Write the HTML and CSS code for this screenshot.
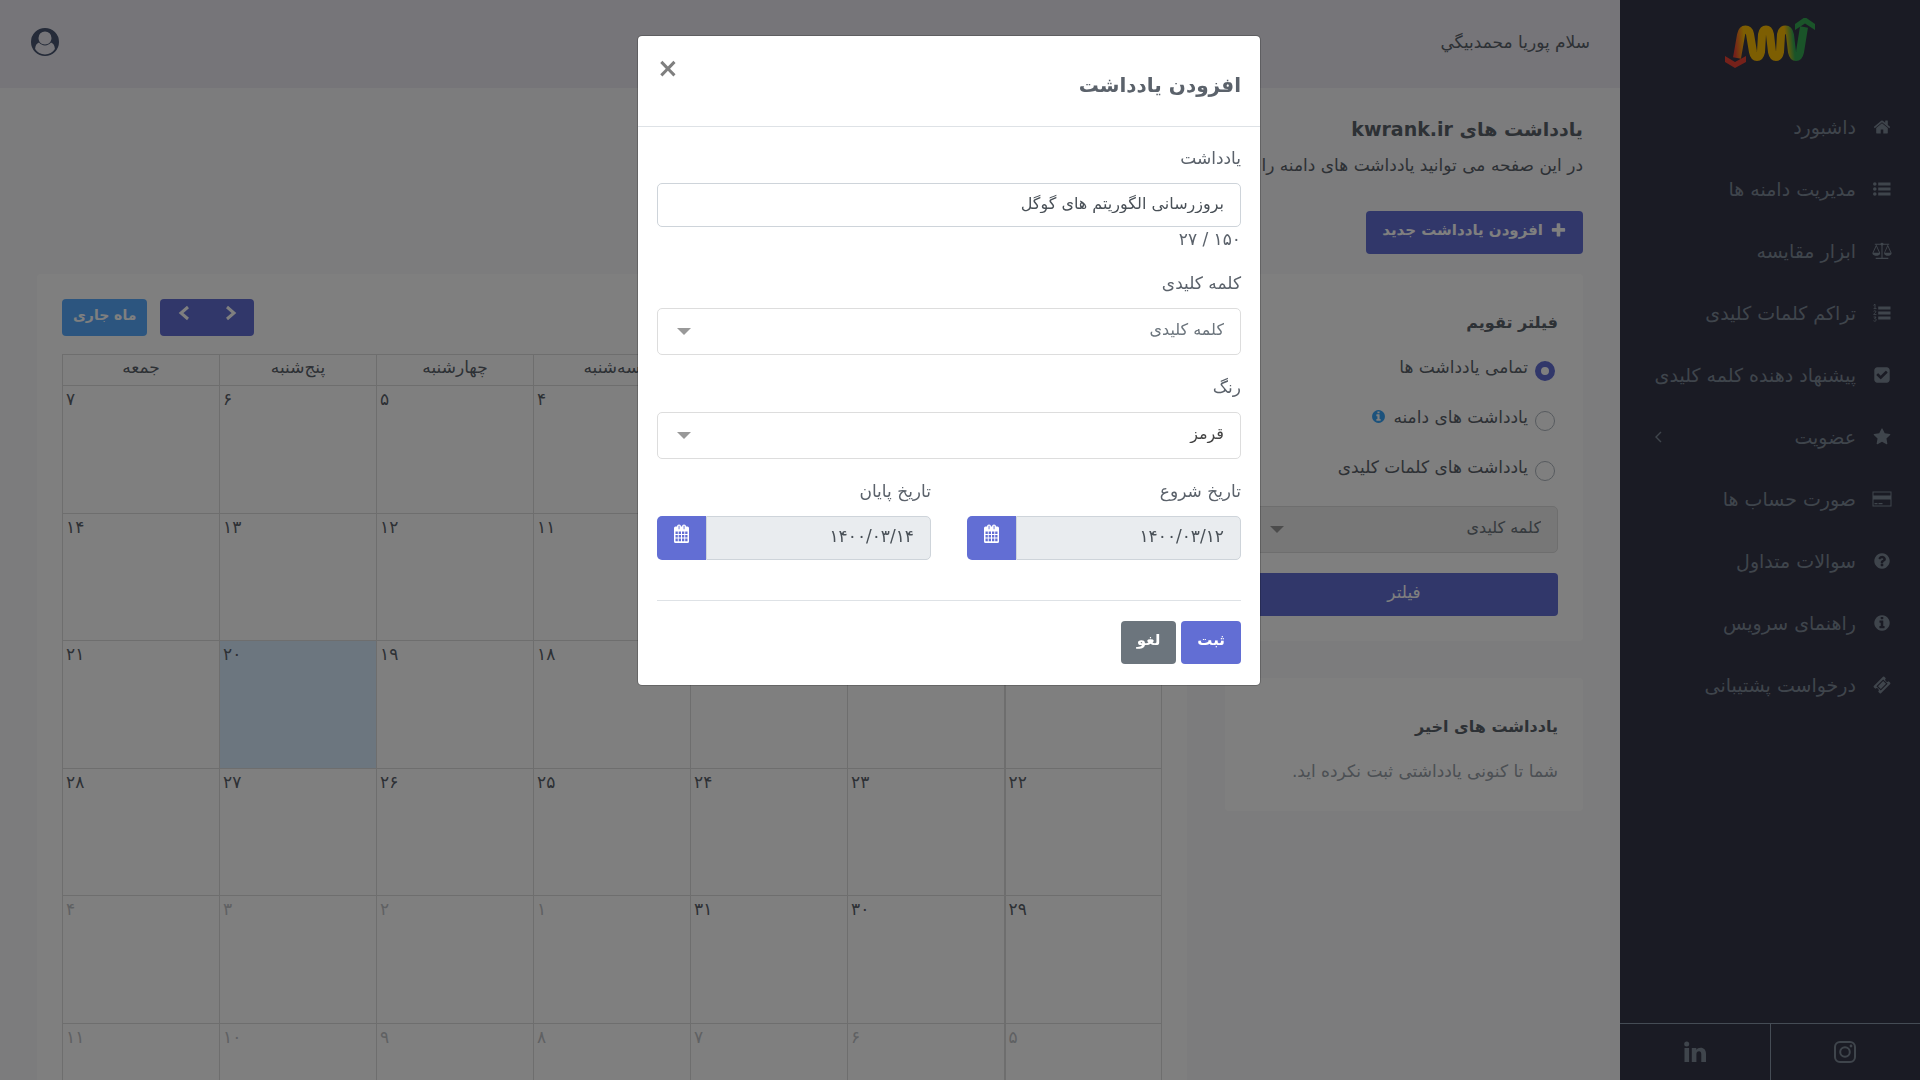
FILE: index.html
```html
<!DOCTYPE html>
<html lang="fa" dir="rtl">
<head>
    <meta charset="UTF-8">
    <meta name="viewport" content="width=device-width, initial-scale=1.0">
    <title>یادداشت های kwrank.ir</title>
    <link rel="stylesheet" href="styles.css">
</head>
<body>
    <svg class="sprite" aria-hidden="true">
        <symbol id="i-home" viewBox="0 0 1792 1792"><path d="M1472 992v480q0 26-19 45t-45 19h-384v-384h-256v384h-384q-26 0-45-19t-19-45v-480q0-1 .5-3t.5-3l575-474 575 474q1 2 1 6zm223-69l-62 74q-8 9-21 11h-3q-13 0-21-7l-692-577-692 577q-12 8-24 7-13-2-21-11l-62-74q-8-10-7-23.5t11-21.5l719-599q32-26 76-26t76 26l244 204v-195q0-14 9-23t23-9h192q14 0 23 9t9 23v408l219 182q10 8 11 21.5t-7 23.5z"/></symbol>
        <symbol id="i-list" viewBox="0 0 18 18"><path d="M5.200 2.500h12.300v3H5.200zM5.200 7.500h12.300v3H5.200zM5.200 12.500h12.300v3H5.200z"/><circle cx="1.800" cy="4" r="1.800"/><circle cx="1.800" cy="9" r="1.800"/><circle cx="1.800" cy="14" r="1.800"/></symbol>
        <symbol id="i-scale" viewBox="0 0 22 20"><path d="M3 2h6.200a2 2 0 0 1 3.600 0H19v1h-1.500l4.200 9.200c0 2-1.800 3.200-4.200 3.200s-4.200-1.200-4.200-3.200L17.200 3h-4.600a2 2 0 0 1-1 .8V17.500H18v1.500H4v-1.500h6.400V3.800a2 2 0 0 1-1-.8H4.800L9 12.200c0 2-1.800 3.200-4.200 3.200S.3 14.200.3 12.200L4.500 3H3zM4.700 5L1.500 12h6.300zM17.400 5l-3.200 7h6.300z"/></symbol>
        <symbol id="i-listol" viewBox="0 0 18 18"><path d="M5.200 2.500h12.300v3H5.200zM5.200 7.500h12.300v3H5.200zM5.200 12.500h12.300v3H5.200z"/><path d="M.5 1.300L2 .2v4.300M.6 4.600h2.900M.6 7.300c.8-.9 2.500-.6 2.300.6-.1.900-2.200 1.600-2.200 2.700h2.700M.6 13h2.500l-1.500 1.700c2.300-.2 2 2.500.2 2.500-.6 0-1-.2-1.300-.5" fill="none" stroke="currentColor" stroke-width=".9"/></symbol>
        <symbol id="i-check" viewBox="0 0 1792 1792"><path d="M813 1299l614-614q19-19 19-45t-19-45l-102-102q-19-19-45-19t-45 19l-467 467-211-211q-19-19-45-19t-45 19l-102 102q-19 19-19 45t19 45l358 358q19 19 45 19t45-19zm851-883v960q0 119-84.500 203.500t-203.500 84.500h-960q-119 0-203.500-84.500t-84.500-203.500v-960q0-119 84.500-203.500t203.500-84.500h960q119 0 203.500 84.500t84.500 203.500z"/></symbol>
        <symbol id="i-star" viewBox="0 0 1792 1792"><path d="M1728 647q0 22-26 48l-363 354 86 500q1 7 1 20 0 21-10.500 35.500t-30.500 14.500q-19 0-40-12l-449-236-449 236q-22 12-40 12-21 0-31.500-14.500t-10.500-35.500q0-6 2-20l86-500-364-354q-25-27-25-48 0-37 56-46l502-73 225-455q19-41 49-41t49 41l225 455 502 73q56 9 56 46z"/></symbol>
        <symbol id="i-card" viewBox="-1 -1 22 18"><path fill-rule="evenodd" d="M.5.5h19v15H.5zM1.500 1.500v3h17v-3zM1.500 8.500v6h17v-6z"/><path d="M2.500 12h3v1.300h-3zM6.500 12h4v1.300h-4z"/></symbol>
        <symbol id="i-question" viewBox="0 0 1792 1792"><path d="M1024 1376v-192q0-14-9-23t-23-9h-192q-14 0-23 9t-9 23v192q0 14 9 23t23 9h192q14 0 23-9t9-23zm256-672q0-88-55.500-163t-138.500-116-170-41q-243 0-371 213-15 24 8 42l132 100q7 6 19 6 16 0 25-12 53-68 86-92 34-24 86-24 48 0 85.500 26t37.500 59q0 38-20 61t-68 45q-63 28-115.500 86.500t-52.500 125.500v36q0 14 9 23t23 9h192q14 0 23-9t9-23q0-19 21.500-49.500t54.500-49.500q32-18 49-28.500t46-35 44.500-48 28-60.500 12.500-81zm384 192q0 209-103 385.500t-279.500 279.500-385.500 103-385.500-103-279.500-279.500-103-385.500 103-385.500 279.500-279.500 385.500-103 385.500 103 279.500 279.500 103 385.500z"/></symbol>
        <symbol id="i-info" viewBox="0 0 1792 1792"><path d="M1152 1376v-160q0-14-9-23t-23-9h-96v-512q0-14-9-23t-23-9h-320q-14 0-23 9t-9 23v160q0 14 9 23t23 9h96v320h-96q-14 0-23 9t-9 23v160q0 14 9 23t23 9h448q14 0 23-9t9-23zm-128-896v-160q0-14-9-23t-23-9h-192q-14 0-23 9t-9 23v160q0 14 9 23t23 9h192q14 0 23-9t9-23zm640 416q0 209-103 385.500t-279.500 279.500-385.500 103-385.500-103-279.500-279.500-103-385.500 103-385.500 279.500-279.500 385.500-103 385.500 103 279.500 279.500 103 385.500z"/></symbol>
        <symbol id="i-ticket" viewBox="0 0 18 18"><path fill-rule="evenodd" d="M11.300.8l1.500 1.500a2 2 0 0 0 2.900 2.900l1.500 1.500a1 1 0 0 1 0 1.300l-9.200 9.200a1 1 0 0 1-1.300 0l-1.500-1.500a2 2 0 0 0-2.900-2.900L.8 11.300a1 1 0 0 1 0-1.300L10 .8a1 1 0 0 1 1.300 0zM10.200 3.400L3.400 10.200l4.400 4.400 6.800-6.800z"/><path d="M10.200 5l2.800 2.800-5.200 5.200L5 10.200z"/></symbol>
        <symbol id="i-plus" viewBox="0 0 1792 1792"><path d="M1600 736v192q0 40-28 68t-68 28h-416v416q0 40-28 68t-68 28h-192q-40 0-68-28t-28-68v-416h-416q-40 0-68-28t-28-68v-192q0-40 28-68t68-28h416v-416q0-40 28-68t68-28h192q40 0 68 28t28 68v416h416q40 0 68 28t28 68z"/></symbol>
        <symbol id="i-calendar" viewBox="0 0 15 19">
            <path fill-rule="evenodd" d="M1.500 2.500H3a2 2 0 0 1 4 0h1a2 2 0 0 1 4 0h1.500a1.500 1.500 0 0 1 1.500 1.500v13.500a1.500 1.500 0 0 1-1.500 1.500h-12A1.500 1.500 0 0 1 0 17.500V4a1.500 1.500 0 0 1 1.500-1.500zM4.600 1.800v3.400h.9V1.800zM9.600 1.800v3.400h.9V1.800zM1.500 7.500V10h2.300V7.500zM4.700 7.500V10H7V7.500zM8 7.500V10h2.300V7.500zM11.200 7.500V10h2.300V7.500zM1.500 11v2.600h2.300V11zM4.700 11v2.600H7V11zM8 11v2.600h2.300V11zM11.200 11v2.600h2.300V11zM1.500 14.600v2.600h2.300v-2.600zM4.700 14.600v2.600H7v-2.600zM8 14.600v2.600h2.300v-2.600zM11.200 14.600v2.600h2.300v-2.600z"/>
        </symbol>
        <symbol id="i-left" viewBox="0 0 12 16"><path d="M10 2L3 8l7 6" fill="none" stroke="currentColor" stroke-width="3"/></symbol>
        <symbol id="i-right" viewBox="0 0 12 16"><path d="M2 2l7 6-7 6" fill="none" stroke="currentColor" stroke-width="3"/></symbol>
        <symbol id="i-angle" viewBox="0 0 8 12"><path d="M7 1L2 6l5 5" fill="none" stroke="currentColor" stroke-width="1.400"/></symbol>
        <symbol id="i-linkedin" viewBox="0 0 22 21"><circle cx="2.700" cy="2.500" r="2.500"/><path d="M.5 6.500h4.600V20.500H.5zM7.800 6.500h4.500v2c.9-1.500 2.300-2.300 4.300-2.300 3.300 0 5.400 2.100 5.400 6.200v8.100h-4.700v-7.500c0-2-.7-3.200-2.300-3.200-1.700 0-2.600 1.200-2.600 3.200v7.500H7.800z"/></symbol>
        <symbol id="i-instagram" viewBox="0 0 22 22"><g fill="none" stroke="currentColor" stroke-width="2"><rect x="1" y="1" width="20" height="20" rx="5"/><circle cx="11" cy="11" r="4.800"/></g><circle cx="17" cy="5" r="1.400"/></symbol>
        <symbol id="i-user" viewBox="0 0 28 28"><path fill-rule="evenodd" d="M14 0a14 14 0 1 1 0 28 14 14 0 0 1 0-28zM14 3.400a6.500 6.500 0 0 0-6.500 6.500c0 3.700 2.800 6.500 6.500 6.500s6.500-2.800 6.500-6.500A6.500 6.500 0 0 0 14 3.400zM8 14.600c-2.500.9-3.700 3-3.900 6.500 2.100 3.300 5.700 5.500 9.900 5.500s7.800-2.200 9.900-5.500c-.2-3.500-1.400-5.600-3.900-6.500-1.500 1.900-3.500 2.800-6 2.800s-4.500-.9-6-2.800z"/></symbol>
    </svg>

    <div class="wrapper">
        <aside class="sidebar">
            <a href="#" class="logo" aria-label="kwrank">
                <svg viewBox="0 0 90 50" width="90" height="50">
                    <defs>
                        <linearGradient id="logoLine" gradientUnits="userSpaceOnUse" x1="10" y1="36" x2="79" y2="30">
                            <stop offset="0" stop-color="#ea4335"/>
                            <stop offset=".15" stop-color="#fbbc05"/>
                            <stop offset=".74" stop-color="#fbbc05"/>
                            <stop offset=".86" stop-color="#34a853"/>
                        </linearGradient>
                    </defs>
                    <path d="M12 40L16 17Q17 11.500 20.500 11.500T25 16L28 34Q29 39 32 39T36 34L37 16.500Q38 11.500 41 11.500T45 16.500L47 34Q48 39 51 39T55 34L56 16.500Q57 11.500 60.500 11.500T65 17L67 34Q68 39 71 39T75 34L79 9" fill="none" stroke="url(#logoLine)" stroke-width="8"/>
                    <path d="M80-1L90 6v6L80 5.500 70 12V6z" fill="#34a853"/>
                    <path d="M10 50L0 44v-6l10 6 11-6v6z" fill="#ea4335"/>
                </svg>
            </a>
            <nav class="menu">
                <a href="#"><svg class="icon"><use href="#i-home"/></svg><span>داشبورد</span></a>
                <a href="#"><svg class="icon"><use href="#i-list"/></svg><span>مدیریت دامنه ها</span></a>
                <a href="#"><svg class="icon"><use href="#i-scale"/></svg><span>ابزار مقایسه</span></a>
                <a href="#"><svg class="icon"><use href="#i-listol"/></svg><span>تراکم کلمات کلیدی</span></a>
                <a href="#"><svg class="icon"><use href="#i-check"/></svg><span>پیشنهاد دهنده کلمه کلیدی</span></a>
                <a href="#"><svg class="icon"><use href="#i-star"/></svg><span>عضویت</span><svg class="arrow"><use href="#i-angle"/></svg></a>
                <a href="#"><svg class="icon"><use href="#i-card"/></svg><span>صورت حساب ها</span></a>
                <a href="#"><svg class="icon"><use href="#i-question"/></svg><span>سوالات متداول</span></a>
                <a href="#"><svg class="icon"><use href="#i-info"/></svg><span>راهنمای سرویس</span></a>
                <a href="#"><svg class="icon"><use href="#i-ticket"/></svg><span>درخواست پشتیبانی</span></a>
            </nav>
            <div class="social">
                <a href="#" aria-label="Instagram"><svg><use href="#i-instagram"/></svg></a>
                <a href="#" aria-label="LinkedIn"><svg><use href="#i-linkedin"/></svg></a>
            </div>
        </aside>

        <div class="main">
            <header class="topbar">
                <span>سلام پوریا محمدبیگي</span>
                <button class="user" aria-label="حساب کاربری"><svg><use href="#i-user"/></svg></button>
            </header>

            <div class="page-title">
                <h1>یادداشت های kwrank.ir</h1>
                <p>در این صفحه می توانید یادداشت های دامنه را</p>
                <button class="btn btn-primary"><svg><use href="#i-plus"/></svg>افزودن یادداشت جدید</button>
            </div>

            <div class="row">
                <div class="col-side">
                    <form class="card">
                        <h2>فیلتر تقویم</h2>
                        <label class="radio"><input type="radio" name="filter" checked>تمامی یادداشت ها</label>
                        <label class="radio"><input type="radio" name="filter">یادداشت های دامنه <svg><use href="#i-info"/></svg></label>
                        <label class="radio"><input type="radio" name="filter">یادداشت های کلمات کلیدی</label>
                        <div class="select disabled">
                            <select aria-label="کلمه کلیدی" disabled><option>کلمه کلیدی</option></select>
                        </div>
                        <button type="button" class="btn btn-primary btn-block">فیلتر</button>
                    </form>
                    <div class="card recent">
                        <h2>یادداشت های اخیر</h2>
                        <p>شما تا کنونی یادداشتی ثبت نکرده اید.</p>
                    </div>
                </div>
                <div class="col-main">
                    <div class="card">
                        <div class="toolbar">
                            <div class="btn-group">
                                <button aria-label="ماه قبل"><svg><use href="#i-right"/></svg></button>
                                <button aria-label="ماه بعد"><svg><use href="#i-left"/></svg></button>
                            </div>
                            <button class="today-btn">ماه جاری</button>
                        </div>
                        <table class="calendar">
                            <thead>
                                <tr><th>شنبه</th><th>یکشنبه</th><th>دوشنبه</th><th>سه‌شنبه</th><th>چهارشنبه</th><th>پنج‌شنبه</th><th>جمعه</th></tr>
                            </thead>
                            <tbody>
                                <tr><td>۱</td><td>۲</td><td>۳</td><td>۴</td><td>۵</td><td>۶</td><td>۷</td></tr>
                                <tr><td>۸</td><td>۹</td><td>۱۰</td><td>۱۱</td><td>۱۲</td><td>۱۳</td><td>۱۴</td></tr>
                                <tr><td>۱۵</td><td>۱۶</td><td>۱۷</td><td>۱۸</td><td>۱۹</td><td class="today">۲۰</td><td>۲۱</td></tr>
                                <tr><td>۲۲</td><td>۲۳</td><td>۲۴</td><td>۲۵</td><td>۲۶</td><td>۲۷</td><td>۲۸</td></tr>
                                <tr><td>۲۹</td><td>۳۰</td><td>۳۱</td><td class="other">۱</td><td class="other">۲</td><td class="other">۳</td><td class="other">۴</td></tr>
                                <tr><td class="other">۵</td><td class="other">۶</td><td class="other">۷</td><td class="other">۸</td><td class="other">۹</td><td class="other">۱۰</td><td class="other">۱۱</td></tr>
                            </tbody>
                        </table>
                    </div>
                </div>
            </div>
        </div>
    </div>

    <div class="modal">
        <div class="modal-content" role="dialog" aria-labelledby="modalTitle">
            <div class="modal-header">
                <h3 id="modalTitle">افزودن یادداشت</h3>
                <button class="close" aria-label="بستن">×</button>
            </div>
            <form class="modal-body">
                <div class="form-group">
                    <label for="note">یادداشت</label>
                    <input type="text" id="note" value="بروزرسانی الگوریتم های گوگل">
                    <div class="counter" dir="ltr">۲۷ / ۱۵۰</div>
                </div>
                <div class="form-group">
                    <label for="keyword">کلمه کلیدی</label>
                    <div class="select placeholder">
                        <select id="keyword"><option>کلمه کلیدی</option></select>
                    </div>
                </div>
                <div class="form-group">
                    <label for="color">رنگ</label>
                    <div class="select">
                        <select id="color"><option>قرمز</option></select>
                    </div>
                </div>
                <div class="dates">
                    <div class="form-group">
                        <label for="start">تاریخ شروع</label>
                        <div class="input-group">
                            <input type="text" id="start" dir="ltr" value="۱۴۰۰/۰۳/۱۲" readonly>
                            <button type="button" aria-label="انتخاب تاریخ شروع"><svg><use href="#i-calendar"/></svg></button>
                        </div>
                    </div>
                    <div class="form-group">
                        <label for="end">تاریخ پایان</label>
                        <div class="input-group">
                            <input type="text" id="end" dir="ltr" value="۱۴۰۰/۰۳/۱۴" readonly>
                            <button type="button" aria-label="انتخاب تاریخ پایان"><svg><use href="#i-calendar"/></svg></button>
                        </div>
                    </div>
                </div>
                <div class="actions">
                    <button type="button" class="btn btn-primary">ثبت</button>
                    <button type="button" class="btn btn-secondary">لغو</button>
                </div>
            </form>
        </div>
    </div>
</body>
</html>
```
FILE: styles.css
```css
* {
    box-sizing: border-box;
}

body {
    margin: 0;
    height: 100vh;
    overflow: hidden;
    font-family: "DejaVu Sans", sans-serif;
    font-size: 17px;
    line-height: 24px;
    color: #5b626b;
    background-color: #f8f8fa;
}

h1, h2, h3, p {
    margin: 0;
}

button, input, select {
    font-family: inherit;
    font-size: 16px;
    color: inherit;
}

button {
    cursor: pointer;
    border: none;
}

a {
    text-decoration: none;
    color: inherit;
}

svg {
    fill: currentColor;
}

.sprite {
    display: none;
}

.wrapper {
    display: flex;
    height: 100vh;
}

/* Sidebar */
.sidebar {
    flex: 0 0 300px;
    min-width: 0;
    display: flex;
    flex-direction: column;
    background-color: #353648;
    color: #7f8b99;
}

.logo {
    height: 96px;
    padding-top: 18px;
    text-align: center;
}

.menu {
    flex: 1;
}

.menu a {
    display: flex;
    align-items: center;
    gap: 15px;
    height: 62px;
    padding: 0 27px 0 34px;
    font-size: 19px;
    white-space: nowrap;
}

.menu .icon {
    flex: none;
    width: 22px;
    height: 18px;
}

.menu .arrow {
    width: 8px;
    height: 12px;
    margin-right: auto;
}

.social {
    display: flex;
    height: 57px;
    border-top: 1px solid #8a98aa;
}

.social a {
    flex: 1;
    display: flex;
    align-items: center;
    justify-content: center;
}

.social a + a {
    border-right: 1px solid #8a98aa;
}

.social svg {
    width: 22px;
    height: 22px;
}

/* Main area */
.main {
    flex: 1;
    min-width: 0;
    overflow: hidden;
}

.topbar {
    display: flex;
    align-items: center;
    justify-content: space-between;
    height: 88px;
    padding: 0 30px 4px;
    background-color: #ecebf2;
}

.user {
    padding: 0;
    background: none;
    color: #4a5672;
}

.user svg {
    display: block;
    width: 30px;
    height: 28px;
}

.page-title {
    height: 186px;
    padding: 24px 37px 0;
}

.page-title h1 {
    font-size: 19px;
    line-height: 34px;
    color: #5b626b;
}

.page-title p {
    line-height: 38px;
    white-space: nowrap;
}

.page-title .btn {
    display: flex;
    align-items: center;
    gap: 7px;
    margin-top: 27px;
}

.page-title .btn svg {
    width: 17px;
    height: 17px;
}

.btn {
    height: 43px;
    padding: 0 16px 5px;
    border-radius: 4px;
    color: #fff;
    font-size: 15px;
    font-weight: bold;
    white-space: nowrap;
}

.btn-primary {
    background-color: #626ed4;
}

.btn-secondary {
    background-color: #6c757d;
}

.btn-block {
    width: 100%;
    font-size: 17px;
    font-weight: normal;
}

.row {
    display: flex;
    padding: 0 18px;
}

.col-side {
    flex: 0 0 25%;
    padding: 0 19px;
}

.col-main {
    flex: 1;
    min-width: 0;
    padding: 0 19px;
}

.card {
    padding: 25px;
    margin-bottom: 37px;
    border-radius: 4px;
    background-color: #fff;
}

.card h2 {
    font-size: 16px;
    line-height: 48px;
    color: #5b626b;
}

.radio {
    display: flex;
    align-items: flex-start;
    gap: 7px;
    height: 50px;
    padding-right: 3px;
    line-height: 40px;
    white-space: nowrap;
}

.radio input {
    appearance: none;
    width: 20px;
    height: 20px;
    margin: 14px 0 0;
    border: 1px solid #adb5bd;
    border-radius: 50%;
}

.radio input:checked {
    border: 6px solid #626ed4;
}

.radio svg {
    width: 15px;
    height: 15px;
    margin-top: 12px;
    color: #38a4f8;
}

.card .select {
    margin: 9px 0 20px;
}

.recent {
    height: 133px;
}

.recent p {
    line-height: 40px;
    color: #98a0a8;
    white-space: nowrap;
}

/* Selects */
.select {
    position: relative;
}

.select select {
    appearance: none;
    display: block;
    width: 100%;
    height: 47px;
    padding: 0 16px 4px;
    border: 1px solid #ddd;
    border-radius: 5px;
    background-color: #fff;
    color: #444;
    opacity: 1;
}

.select::after {
    content: "";
    position: absolute;
    left: 20px;
    top: 20px;
    border: 7px solid transparent;
    border-top-color: #999;
    border-bottom: none;
}

.placeholder select,
.disabled select {
    color: #6c757d;
}

.disabled select {
    background-color: #eee;
}

/* Calendar */
.toolbar {
    display: flex;
    justify-content: flex-end;
    gap: 13px;
    margin-bottom: 18px;
}

.btn-group {
    display: flex;
    border-radius: 4px;
    background-color: #626ed4;
}

.btn-group button {
    width: 47px;
    height: 37px;
    padding: 0 0 6px;
    background: none;
    color: #fff;
}

.btn-group svg {
    width: 12px;
    height: 16px;
}

.today-btn {
    height: 37px;
    padding: 0 11px 5px;
    border-radius: 4px;
    background-color: #58abff;
    color: #fff;
    font-size: 14px;
    font-weight: bold;
}

.calendar {
    width: 100%;
    table-layout: fixed;
    border-collapse: collapse;
}

.calendar th,
.calendar td {
    border: 1px solid #ddd;
}

.calendar th:first-child,
.calendar td:first-child {
    border-left-width: 2px;
}

.calendar th {
    height: 31px;
    padding: 0 0 6px;
    font-weight: normal;
}

.calendar td {
    height: 128px;
    padding: 1px 3px;
    vertical-align: top;
    text-align: left;
}

.calendar tr:nth-child(even) td {
    height: 127px;
}

.calendar .today {
    background-color: #d9edff;
}

.calendar .other {
    color: #bfc2c6;
}

/* Modal */
.modal {
    position: fixed;
    inset: 0;
    display: flex;
    align-items: flex-start;
    justify-content: center;
    padding: 35px 22px 0 0;
    background-color: rgba(0, 0, 0, 0.5);
}

.modal-content {
    width: 624px;
    border: 1px solid rgba(0, 0, 0, 0.2);
    border-radius: 5px;
    background-color: #fff;
    background-clip: padding-box;
}

.modal-header {
    display: flex;
    justify-content: space-between;
    align-items: flex-start;
    padding: 19px;
    height: 91px;
    border-bottom: 1px solid #dee2e6;
}

.modal-header h3 {
    font-size: 20px;
    line-height: 60px;
}

.close {
    padding: 0;
    background: none;
    color: #7f7f7f;
    font-size: 26px;
    font-weight: bold;
    line-height: 26px;
}

.modal-body {
    padding: 19px 19px 21px;
}

.form-group {
    flex: 1;
    min-width: 0;
    margin-bottom: 20px;
}

.form-group label {
    display: block;
    margin-bottom: 13px;
}

.modal-body input {
    display: block;
    width: 100%;
    height: 44px;
    padding: 0 16px 4px;
    border: 1px solid #ced4da;
    border-radius: 5px;
    background-color: #fff;
    color: #495057;
    text-align: right;
}

.counter {
    text-align: right;
}

.dates {
    display: flex;
    gap: 36px;
}

.input-group {
    display: flex;
}

.modal-body .input-group input {
    flex: 1;
    min-width: 0;
    border-radius: 0 5px 5px 0;
    background-color: #e9ecef;
    font-size: 17px;
}

.input-group button {
    width: 49px;
    height: 44px;
    padding: 0 0 6px;
    border-radius: 5px 0 0 5px;
    background-color: #626ed4;
    color: #fff;
}

.input-group svg {
    width: 15px;
    height: 19px;
}

.actions {
    display: flex;
    gap: 5px;
    margin-top: 20px;
    padding-top: 20px;
    border-top: 1px solid #dee2e6;
}
```
